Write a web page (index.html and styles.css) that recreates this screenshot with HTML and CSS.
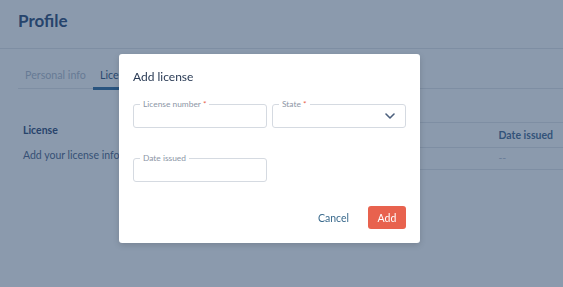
FILE: index.html
```html
<!DOCTYPE html>
<html lang="en">

<head>
    <meta charset="UTF-8">
    <meta name="viewport" content="width=device-width, initial-scale=1.0">
    <title>Profile</title>
    <link rel="stylesheet" href="styles.css">
</head>

<body>
    <header class="page-header">
        <h1>Profile</h1>
    </header>

    <main class="content">
        <nav class="tabs">
            <a class="tab">Personal info</a>
            <a class="tab active">Licenses</a>
        </nav>

        <section class="licenses">
            <div class="licenses-intro">
                <h2>License</h2>
                <p>Add your license info.</p>
            </div>
            <table class="license-table">
                <thead>
                    <tr>
                        <th>License number</th>
                        <th>State</th>
                        <th class="col-date">Date issued</th>
                    </tr>
                </thead>
                <tbody>
                    <tr>
                        <td>--</td>
                        <td>--</td>
                        <td class="col-date">--</td>
                    </tr>
                </tbody>
            </table>
        </section>
    </main>

    <div class="overlay"></div>

    <div class="modal">
        <h3 class="modal-title">Add license</h3>

        <div class="field-row">
            <div class="field">
                <label>License number <span class="req">*</span></label>
                <input type="text">
            </div>
            <div class="field">
                <label>State <span class="req">*</span></label>
                <div class="select">
                    <svg class="chevron" width="10" height="6" viewBox="0 0 10 6">
                        <path d="M1 1l4 4 4-4" fill="none" stroke="#4c607d" stroke-width="1.6" stroke-linecap="round" stroke-linejoin="round" />
                    </svg>
                </div>
            </div>
        </div>

        <div class="field-row second">
            <div class="field">
                <label>Date issued</label>
                <input type="text">
            </div>
        </div>

        <div class="modal-actions">
            <button class="btn-cancel">Cancel</button>
            <button class="btn-add">Add</button>
        </div>
    </div>
</body>

</html>
```

FILE: styles.css
```css
body {
    margin: 0;
    font-family: Lato, "Open Sans", sans-serif;
    font-size: 10.5px;
    line-height: 14px;
    background-color: #ffffff;
    color: #3d577d;
}

.page-header {
    padding: 11px 18px 17px;
    border-bottom: 1px solid #e5e7eb;
}

.page-header h1 {
    margin: 0;
    font-size: 17px;
    line-height: 20px;
    font-weight: 700;
    color: #34527c;
}

.content {
    padding-left: 18px;
}

.tabs {
    display: flex;
    margin-top: 13px;
    border-bottom: 1px solid #e5e7eb;
}

.tab {
    padding: 6px 7px 5px;
    border-bottom: 3px solid transparent;
    margin-bottom: -2px;
    font-size: 10.7px;
    color: #b6bfce;
}

.tab.active {
    color: #3b5b82;
    border-bottom-color: #3a72a3;
}

.licenses {
    display: flex;
    align-items: flex-start;
    margin-top: 33px;
}

.licenses-intro {
    width: 130px;
    padding-left: 5px;
    padding-top: 1px;
}

.licenses-intro h2 {
    margin: 0;
    font-size: 10.5px;
    font-weight: 700;
    color: #37507a;
}

.licenses-intro p {
    margin: 11px 0 0;
    color: #566b8e;
}

.license-table {
    flex: 1;
    border-collapse: collapse;
}

.license-table th,
.license-table td {
    border-top: 1px solid #e5e7eb;
    border-bottom: 1px solid #e5e7eb;
    text-align: left;
    white-space: nowrap;
    padding: 5px 12px;
}

.license-table th {
    font-weight: 700;
    color: #4f7197;
}

.license-table td {
    padding: 3px 12px 4px;
    color: #bdc5d4;
}

.license-table .col-date {
    width: 52px;
    padding-left: 14px;
    padding-right: 10px;
}

.overlay {
    position: fixed;
    inset: 0;
    background-color: rgba(23, 53, 91, 0.5);
}

.modal {
    position: fixed;
    left: 119px;
    top: 54px;
    width: 273px;
    padding: 15px 14px 14px;
    background-color: #ffffff;
    border-radius: 3px;
    box-shadow: 0 2px 6px rgba(0, 0, 0, 0.15);
}

.modal-title {
    margin: 0;
    font-size: 12px;
    line-height: 16px;
    font-weight: 400;
    color: #2a3b55;
}

.field-row {
    display: flex;
    gap: 5px;
    margin-top: 19px;
}

.field-row.second {
    margin-top: 30px;
}

.field {
    position: relative;
    width: 134px;
}

.field input,
.field .select {
    box-sizing: border-box;
    display: block;
    width: 100%;
    height: 24px;
    margin: 0;
    border: 1px solid #d5dae1;
    border-radius: 3px;
    background: #ffffff;
}

.field .select {
    display: flex;
    align-items: center;
    justify-content: flex-end;
    padding-right: 10px;
}

.field label {
    position: absolute;
    left: 7px;
    top: -5px;
    padding: 0 3px;
    font-size: 8.4px;
    line-height: 10px;
    color: #8c96a6;
    background: #ffffff;
}

.req {
    color: #e8604c;
}

.modal-actions {
    display: flex;
    justify-content: flex-end;
    align-items: center;
    gap: 9px;
    margin-top: 24px;
}

.modal-actions button {
    font-family: Lato, "Open Sans", sans-serif;
    font-size: 10.5px;
    height: 23px;
    border: none;
    border-radius: 3px;
    cursor: pointer;
}

.btn-cancel {
    padding: 0 10px;
    background: none;
    color: #3a6a8d;
}

.btn-add {
    width: 38px;
    padding: 0;
    background-color: #e8624e;
    color: #ffffff;
}
```
